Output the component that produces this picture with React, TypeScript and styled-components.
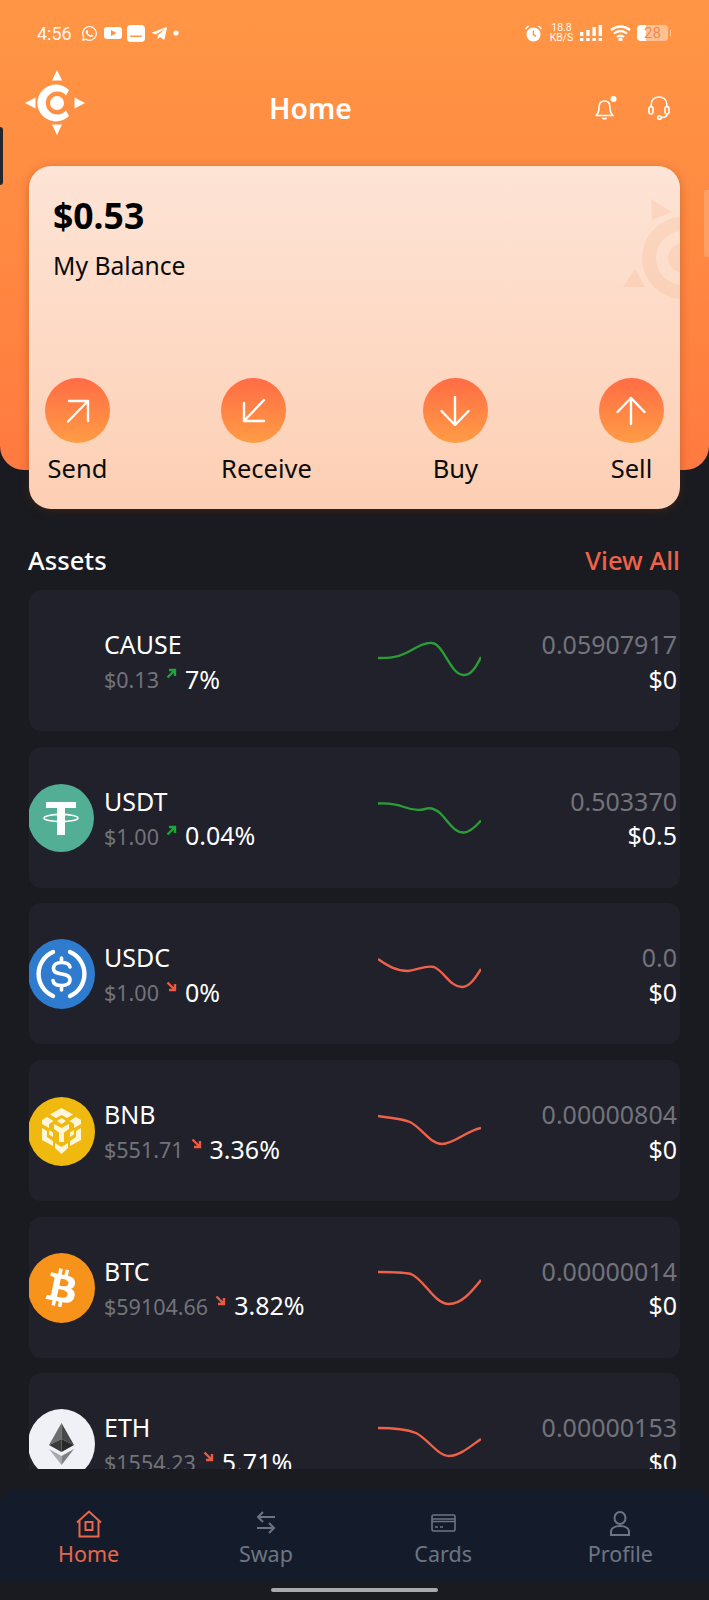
import React from 'react'
import styled, { createGlobalStyle } from 'styled-components'
import { FaWhatsapp, FaTelegramPlane, FaBtc } from 'react-icons/fa'

const GlobalStyle = createGlobalStyle`
  html, body {
    margin: 0;
    padding: 0;
    background: #1a1b20;
  }
  * {
    box-sizing: border-box;
  }
`

const Page = styled.div`
  position: relative;
  width: 709px;
  height: 1600px;
  overflow: hidden;
  display: flex;
  flex-direction: column;
  background: #1a1b20;
  font-family: 'Noto Sans', 'Open Sans', sans-serif;
  color: #fff;
`

const Hero = styled.header`
  height: 470px;
  flex-shrink: 0;
  padding-top: 24px;
  background: linear-gradient(180deg, #ff9645 0%, #ff8c42 40%, #ff7a40 100%);
  border-radius: 0 0 24px 24px;
`

const StatusBar = styled.div`
  height: 18px;
  padding: 0 38px 0 37px;
  display: flex;
  align-items: center;
  justify-content: space-between;
  color: #fff;
`

const StatusGroup = styled.div`
  display: flex;
  align-items: center;
  gap: 5.5px;
`

const StatusRight = styled(StatusGroup)`
  gap: 6.5px;
`

const Clock = styled.span`
  font-family: Roboto, sans-serif;
  font-size: 18px;
  opacity: 0.9;
  margin-right: 4px;
`

const Speed = styled.span`
  font-family: Roboto, sans-serif;
  font-size: 10.5px;
  line-height: 10px;
  text-align: center;
  width: 24px;
  opacity: 0.95;
`

const Battery = styled.span`
  position: relative;
  width: 31px;
  height: 16px;
  margin-right: 3px;
  border-radius: 4px;
  background: linear-gradient(90deg, #fff 0 30%, rgba(255, 255, 255, 0.42) 30%);
  color: #ef8a52;
  font-family: Roboto, sans-serif;
  font-size: 15px;
  line-height: 16px;
  text-align: center;

  &::after {
    content: '';
    position: absolute;
    right: -3px;
    top: 5px;
    width: 1.5px;
    height: 6px;
    background: rgba(255, 255, 255, 0.5);
  }
`

const TopBar = styled.div`
  margin-top: 28px;
  height: 65px;
  padding: 0 39px 0 25px;
  display: flex;
  align-items: center;
`

const Title = styled.h1`
  margin: 10px 0 0 184px;
  font-size: 28.4px;
  font-weight: 600;
  line-height: 36px;
`

const TopActions = styled.div`
  margin: 10px 0 0 auto;
  display: flex;
  align-items: center;
  gap: 31px;
`

const BalanceCard = styled.section`
  position: relative;
  flex-shrink: 0;
  height: 343px;
  margin: -304px 29px 0;
  padding: 27px 16px 24px;
  display: flex;
  flex-direction: column;
  overflow: hidden;
  border-radius: 22px;
  background: linear-gradient(180deg, #fde4d6 0%, #fdcfb4 100%);
  box-shadow: 0 2px 10px rgba(110, 50, 10, 0.35);
  color: #0b0b0b;
`

const Balance = styled.div`
  margin-left: 8px;
  font-size: 35.5px;
  font-weight: 700;
  line-height: 44px;
  color: #000;
`

const BalanceLabel = styled.div`
  margin: 12px 0 0 8px;
  font-size: 24.7px;
  line-height: 34px;
`

const Watermark = styled.svg`
  position: absolute;
  right: 0;
  top: 30px;
`

const ActionRow = styled.div`
  margin-top: auto;
  display: flex;
  justify-content: space-between;
`

const Action = styled.div`
  display: flex;
  flex-direction: column;
  align-items: center;
`

const ActionCircle = styled.span`
  align-self: flex-start;
  width: 65px;
  height: 65px;
  display: flex;
  align-items: center;
  justify-content: center;
  border-radius: 50%;
  background: linear-gradient(180deg, #ff6c45 0%, #ff9c45 100%);
`

const ActionLabel = styled.span`
  margin-top: 8px;
  font-size: 25.5px;
  line-height: 34px;
`

const SectionHead = styled.div`
  flex-shrink: 0;
  margin: 34px 29px 13px 28px;
  height: 34px;
  display: flex;
  align-items: center;
  justify-content: space-between;
  font-size: 25.6px;
  font-weight: 500;
`

const ViewAll = styled.span`
  color: #f0634a;
`

const AssetList = styled.div`
  height: 879px;
  flex-shrink: 0;
  margin: 0 29px;
  display: flex;
  flex-direction: column;
  gap: 15.7px;
  overflow: hidden;
`

const AssetRow = styled.div`
  flex-shrink: 0;
  height: 141px;
  padding-right: 3px;
  display: flex;
  border-radius: 12px;
  background: #20212a;
`

const CoinSlot = styled.div`
  flex-shrink: 0;
  width: 76px;
  margin-left: -1px;
  padding-top: 1px;
  display: flex;
  align-items: center;
`

const Coin = styled.svg`
  display: block;
`

const CoinCircle = styled.span<{ $bg: string }>`
  width: 67px;
  height: 70px;
  display: flex;
  align-items: center;
  justify-content: center;
  border-radius: 50%;
  background: ${(p) => p.$bg};
`

const BtcGlyph = styled(FaBtc)`
  transform: rotate(12deg);
`

const AssetInfo = styled.div`
  width: 274px;
  flex-shrink: 0;
  padding-top: 38px;
`

const AssetName = styled.div`
  font-size: 25px;
  line-height: 33.5px;
`

const TextLine = styled.div`
  height: 34px;
  display: flex;
  align-items: center;
  white-space: nowrap;
`

const Price = styled.span`
  font-size: 21.5px;
  color: #72737b;
  margin-top: 2px;
`

const Trend = styled.svg`
  margin: 0 8px 10px 7px;
  flex-shrink: 0;
`

const Percent = styled.span`
  font-size: 25px;
`

const Spark = styled.svg`
  flex-shrink: 0;
  margin-top: 41px;
`

const Holdings = styled.div`
  flex: 1;
  padding-top: 38px;
  text-align: right;
`

const Amount = styled.div`
  font-size: 25px;
  line-height: 33.5px;
  color: #72737b;
`

const Value = styled.div`
  font-size: 25px;
  line-height: 34px;
`

const BottomNav = styled.nav`
  flex-shrink: 0;
  height: 92px;
  margin-top: 21px;
  display: grid;
  grid-template-columns: repeat(4, 1fr);
  border-radius: 14px 14px 0 0;
  background: #141c2b;
`

const NavItem = styled.div<{ $active?: boolean }>`
  padding-top: 20px;
  display: flex;
  flex-direction: column;
  align-items: center;
  color: ${(p) => (p.$active ? '#e8674a' : '#6d7584')};
`

const NavIcon = styled.svg`
  height: 28px;
  color: inherit;
`

const NavLabel = styled.span`
  font-size: 21.5px;
  line-height: 30px;
  margin-top: 1px;
`

const HomeBar = styled.div`
  width: 167px;
  height: 4px;
  margin: 6px auto 0;
  border-radius: 2px;
  background: #a9a9ab;
`

const EdgeTab = styled.div<{ $side: 'left' | 'right' }>`
  position: absolute;
  ${(p) =>
    p.$side === 'left'
      ? `left: 0; top: 127px; height: 58px; width: 3px; background: #26272c; border-radius: 0 3px 3px 0;`
      : `right: 0; top: 190px; height: 67px; width: 5px; background: rgba(255, 235, 215, 0.22); border-radius: 3px 0 0 3px;`}
`

const Logo = () => (
  <svg width="60" height="65" viewBox="0 0 60 65" fill="#fff">
    <polygon points="32,0 37,10.5 27,10.5" />
    <polygon points="32,65 37,54.5 27,54.5" />
    <polygon points="0,33 10.5,27.5 10.5,38.5" />
    <polygon points="60,33 49.5,27.5 49.5,38.5" />
    <circle cx="32" cy="33" r="7" />
    <path
      d="M44 20 A18.5 18.5 0 1 0 44 46 L41 40.5 A11.5 11.5 0 1 1 41 25.5 Z"
      fill="#fff"
    />
  </svg>
)

const Alarm = () => (
  <svg width="19" height="17" viewBox="0 0 18 17" fill="#fff">
    <circle cx="9" cy="9.5" r="7" />
    <path d="M9 5.5v4.3l2.6 1.6" stroke="#ff9245" strokeWidth="1.4" fill="none" />
    <path d="M1 4 L4 1 M17 4 L14 1" stroke="#fff" strokeWidth="1.5" />
  </svg>
)

const SignalBars = () => (
  <svg width="23" height="16" viewBox="0 0 23 16" fill="#fff">
    <rect x="0" y="7" width="3.4" height="4" />
    <rect x="6.2" y="5" width="3.4" height="6" />
    <rect x="12.4" y="2" width="3.4" height="9" />
    <rect x="18.6" y="0" width="3.4" height="11" />
    <rect x="0" y="13" width="3.4" height="3" />
    <rect x="6.2" y="13" width="3.4" height="3" />
    <rect x="12.4" y="13" width="3.4" height="3" />
    <rect x="18.6" y="13" width="3.4" height="3" />
  </svg>
)

const Wifi = () => (
  <svg width="21" height="16" viewBox="0 0 21 16" fill="none" stroke="#fff" strokeWidth="2.2">
    <path d="M1 5 Q10.5 -2 20 5" />
    <path d="M4 8.5 Q10.5 3.5 17 8.5" />
    <path d="M7 12 Q10.5 9.3 14 12" />
    <circle cx="10.5" cy="14.6" r="1" fill="#fff" />
  </svg>
)

const YouTubeBadge = () => (
  <svg width="18" height="12" viewBox="0 0 18 12">
    <rect width="18" height="12" rx="3" fill="#fff" />
    <polygon points="7,3 7,9 12.5,6" fill="#ff9245" />
  </svg>
)

const MessageBadge = () => (
  <svg width="18" height="17" viewBox="0 0 18 17">
    <rect width="18" height="17" rx="4" fill="#fff" />
    <rect x="3" y="10.5" width="12" height="1.6" rx="0.8" fill="#ff9245" />
  </svg>
)

const Bell = () => (
  <svg width="22" height="24" viewBox="0 0 22 24" fill="none" stroke="#fff" strokeWidth="1.6" strokeLinejoin="round">
    <path d="M1 19.5 C3.5 17.5 4 15 4 11.5 C4 7.5 6 5 9.5 5 C13 5 15 7.5 15 11.5 C15 15 15.5 17.5 18 19.5 Z" />
    <path d="M7.5 22 Q9.5 23.4 11.5 22" />
    <circle cx="18.5" cy="3" r="3" fill="#fff" stroke="none" />
  </svg>
)

const Headset = () => (
  <svg width="22" height="24" viewBox="0 0 22 24" fill="none" stroke="#fff" strokeWidth="1.6" strokeLinecap="round">
    <path d="M3 11 V9.5 C3 4 6.5 1 11 1 C15.5 1 19 4 19 9.5 V11" />
    <rect x="1" y="10.5" width="4" height="7.5" rx="2" />
    <rect x="17" y="10.5" width="4" height="7.5" rx="2" />
    <path d="M19 18 C19 20.5 17 21.5 13.5 21.5" />
    <circle cx="11.5" cy="21.5" r="1.8" />
  </svg>
)

const Arrow = ({ d }: { d: string }) => (
  <svg width="30" height="30" viewBox="0 0 30 30" fill="none" stroke="#fff" strokeWidth="2.4" strokeLinecap="round" strokeLinejoin="round">
    <path d={d} />
  </svg>
)

const TetherCoin = () => (
  <Coin width="66" height="68" viewBox="0 0 66 68">
    <ellipse cx="33" cy="34" rx="33" ry="34" fill="#52ae94" />
    <rect x="18" y="18" width="30" height="6" fill="#fff" />
    <rect x="29" y="18" width="8" height="33" fill="#fff" />
    <ellipse cx="33" cy="34" rx="17" ry="3.6" fill="none" stroke="#fff" strokeWidth="1.6" />
  </Coin>
)

const UsdcCoin = () => (
  <Coin width="67" height="70" viewBox="0 0 67 70">
    <ellipse cx="33.5" cy="35" rx="33.5" ry="35" fill="#2f7ccf" />
    <g fill="none" stroke="#fff" strokeWidth="4.4" strokeLinecap="round">
      <path d="M25 13 A24 24 0 0 0 25 57" />
      <path d="M42 13 A24 24 0 0 1 42 57" />
    </g>
    <g fill="none" stroke="#fff" strokeWidth="3.6" strokeLinecap="round">
      <path d="M42 28 C41 24 37 23.5 33.5 23.5 C29 23.5 25.5 25.5 25.5 29.5 C25.5 38 42 32 42 41 C42 45 38 46.5 33.5 46.5 C29 46.5 25.5 45.5 25 41.5" />
      <path d="M33.5 19 V23 M33.5 47 V51" />
    </g>
  </Coin>
)

const BnbCoin = () => (
  <Coin width="67" height="69" viewBox="0 0 67 69">
    <ellipse cx="33.5" cy="34.5" rx="33.5" ry="34.5" fill="#efb90f" />
    <g fill="#fff5d9">
      <polygon points="33.5,11 45,17.5 39,21 33.5,18 28,21 22,17.5" />
      <polygon points="33.5,21 38,24 33.5,27 29,24" />
      <polygon points="19,20 25.5,24 21,27 21,31 14,27 14,23" />
      <polygon points="48,20 41.5,24 46,27 46,31 53,27 53,23" />
      <polygon points="26,27 33.5,31 41,27 41,32 36,35.5 36,45 31,45 31,35.5 26,32" />
      <polygon points="14,31 19,34 19,40 25,44 25,49 14,43" />
      <polygon points="53,31 48,34 48,40 42,44 42,49 53,43" />
      <polygon points="21,33 25,35.5 25,40 21,37.5" />
      <polygon points="46,33 42,35.5 42,40 46,37.5" />
      <polygon points="27,46 33.5,50 40,46 40,51 33.5,57 27,51" />
    </g>
  </Coin>
)

const BtcCoin = () => (
  <CoinCircle $bg="#f7931a">
    <BtcGlyph size={38} color="#fff" />
  </CoinCircle>
)

const EthCoin = () => (
  <Coin width="67" height="70" viewBox="0 0 67 70">
    <ellipse cx="33.5" cy="35" rx="33.5" ry="35" fill="#eff1f6" />
    <polygon points="33.5,14 33.5,30 21,36" fill="#6e6e71" />
    <polygon points="33.5,14 33.5,30 46,36" fill="#48484b" />
    <polygon points="21,36 33.5,30 33.5,43" fill="#3a3a3d" />
    <polygon points="46,36 33.5,30 33.5,43" fill="#29292c" />
    <polygon points="21,40 33.5,47 33.5,56" fill="#a9a9ac" />
    <polygon points="46,40 33.5,47 33.5,56" fill="#808084" />
  </Coin>
)

const UP_COLOR = '#2a9d36'
const DOWN_COLOR = '#f0614a'

const TrendArrow = ({ up }: { up: boolean }) => (
  <Trend width="11" height="11" viewBox="0 0 11 11" fill="none" stroke={up ? '#1fa53a' : '#ee5a41'} strokeWidth="2.4">
    {up ? <path d="M1.5 9.5 L8.5 2.5 M3 2 H9 V8" /> : <path d="M1.5 1.5 L8.5 8.5 M3 9 H9 V3" />}
  </Trend>
)

interface Asset {
  symbol: string
  price: string
  percent: string
  up: boolean
  amount: string
  value: string
  spark: string
  coin?: React.ReactNode
}

const assets: Asset[] = [
  {
    symbol: 'CAUSE',
    price: '$0.13',
    percent: '7%',
    up: true,
    amount: '0.05907917',
    value: '$0',
    spark: 'M0 27 C10 27 18 27 28 22 C38 17 46 11 54 12 C66 13 72 44 86 44 C94 44 99 34 103 26',
  },
  {
    symbol: 'USDT',
    price: '$1.00',
    percent: '0.04%',
    up: true,
    amount: '0.503370',
    value: '$0.5',
    spark: 'M0 15.5 C10 15 18 16 26 19 C34 22 40 23 47 21 C52 19 56 20 62 25 C70 33 76 45 86 44.5 C93 44 99 37 103 32.5',
    coin: <TetherCoin />,
  },
  {
    symbol: 'USDC',
    price: '$1.00',
    percent: '0%',
    up: false,
    amount: '0.0',
    value: '$0',
    spark: 'M0 15 C10 22 18 27 30 27 C40 26 47 21 56 23 C66 27 72 43 84 43 C92 43 98 33 103 25',
    coin: <UsdcCoin />,
  },
  {
    symbol: 'BNB',
    price: '$551.71',
    percent: '3.36%',
    up: false,
    amount: '0.00000804',
    value: '$0',
    spark: 'M0 15 C12 17 22 17 32 21 C44 27 52 43 64 43 C76 43 88 30 103 27',
    coin: <BnbCoin />,
  },
  {
    symbol: 'BTC',
    price: '$59104.66',
    percent: '3.82%',
    up: false,
    amount: '0.00000014',
    value: '$0',
    spark: 'M0 14 C12 14 24 14 33 16 C46 21 56 46 71 46 C84 46 94 33 103 22',
    coin: <BtcCoin />,
  },
  {
    symbol: 'ETH',
    price: '$1554.23',
    percent: '5.71%',
    up: false,
    amount: '0.00000153',
    value: '$0',
    spark: 'M0 14 C14 14 28 15 38 19 C50 25 60 42 71 42 C82 42 94 31 103 25',
    coin: <EthCoin />,
  },
]

const actions = [
  { label: 'Send', d: 'M5 25.5 L25 5 M6 5 H25 V25' },
  { label: 'Receive', d: 'M25 4 L5 25 M5 7 V25 H25' },
  { label: 'Buy', d: 'M15 1 V29 M1.5 15 L15 29 L28.5 15' },
  { label: 'Sell', d: 'M15 28 V2 M1.5 16 L15 2 L28.5 16' },
]

const AssetItem = ({ asset }: { asset: Asset }) => (
  <AssetRow>
    <CoinSlot>{asset.coin}</CoinSlot>
    <AssetInfo>
      <AssetName>{asset.symbol}</AssetName>
      <TextLine>
        <Price>{asset.price}</Price>
        <TrendArrow up={asset.up} />
        <Percent>{asset.percent}</Percent>
      </TextLine>
    </AssetInfo>
    <Spark width="103" height="60" viewBox="0 0 103 60" fill="none">
      <path d={asset.spark} stroke={asset.up ? UP_COLOR : DOWN_COLOR} strokeWidth="2.4" />
    </Spark>
    <Holdings>
      <Amount>{asset.amount}</Amount>
      <Value>{asset.value}</Value>
    </Holdings>
  </AssetRow>
)

export default function App() {
  return (
    <Page>
      <GlobalStyle />
      <EdgeTab $side="left" />
      <EdgeTab $side="right" />

      <Hero>
        <StatusBar>
          <StatusGroup>
            <Clock>4:56</Clock>
            <FaWhatsapp size={17} color="#fff" />
            <YouTubeBadge />
            <MessageBadge />
            <FaTelegramPlane size={17} color="#fff" />
            <svg width="6" height="6" viewBox="0 0 6 6" fill="#fff">
              <circle cx="3" cy="3" r="2.6" />
            </svg>
          </StatusGroup>
          <StatusRight>
            <Alarm />
            <Speed>
              18.8
              <br />
              KB/S
            </Speed>
            <SignalBars />
            <Wifi />
            <Battery>28</Battery>
          </StatusRight>
        </StatusBar>

        <TopBar>
          <Logo />
          <Title>Home</Title>
          <TopActions>
            <Bell />
            <Headset />
          </TopActions>
        </TopBar>
      </Hero>

      <BalanceCard>
        <Watermark width="62" height="104" viewBox="0 0 62 104" fill="#f6c2a2" opacity="0.38">
          <polygon points="33,3 54,16 34,24" />
          <polygon points="5,91 27,91 17,73" />
          <circle cx="65" cy="62" r="34" fill="none" stroke="#f6c2a2" strokeWidth="14" />
          <circle cx="65" cy="62" r="15" />
        </Watermark>
        <Balance>$0.53</Balance>
        <BalanceLabel>My Balance</BalanceLabel>
        <ActionRow>
          {actions.map((action) => (
            <Action key={action.label}>
              <ActionCircle>
                <Arrow d={action.d} />
              </ActionCircle>
              <ActionLabel>{action.label}</ActionLabel>
            </Action>
          ))}
        </ActionRow>
      </BalanceCard>

      <SectionHead>
        <span>Assets</span>
        <ViewAll>View All</ViewAll>
      </SectionHead>

      <AssetList>
        {assets.map((asset) => (
          <AssetItem key={asset.symbol} asset={asset} />
        ))}
      </AssetList>

      <BottomNav>
        <NavItem $active>
          <NavIcon width="28" viewBox="0 0 28 28" fill="none" stroke="currentColor" strokeWidth="2">
            <path d="M2 12.5 L14 1.5 L26 12.5 M4.5 10.5 V26.5 H23.5 V10.5" />
            <rect x="10.5" y="12" width="7" height="8" />
          </NavIcon>
          <NavLabel>Home</NavLabel>
        </NavItem>
        <NavItem>
          <NavIcon width="22" viewBox="0 0 22 28" fill="none" stroke="currentColor" strokeWidth="2">
            <path d="M20 7 H3 M8 2 L3 7 L8 12" />
            <path d="M2 18 H19 M14 13 L19 18 L14 23" />
          </NavIcon>
          <NavLabel>Swap</NavLabel>
        </NavItem>
        <NavItem>
          <NavIcon width="25" viewBox="0 0 25 28" fill="none" stroke="currentColor" strokeWidth="1.6">
            <rect x="1" y="5" width="23" height="16" rx="1.5" />
            <path d="M1 9 H24 M1 11.5 H24 M4 17 H7 M9 17 H12" />
          </NavIcon>
          <NavLabel>Cards</NavLabel>
        </NavItem>
        <NavItem>
          <NavIcon width="22" viewBox="0 0 22 28" fill="none" stroke="currentColor" strokeWidth="2">
            <ellipse cx="11" cy="8" rx="5.5" ry="6" />
            <path d="M2 25 V22 C2 18 6 16 11 16 C16 16 20 18 20 22 V25 Z" />
          </NavIcon>
          <NavLabel>Profile</NavLabel>
        </NavItem>
      </BottomNav>
      <HomeBar />
    </Page>
  )
}
